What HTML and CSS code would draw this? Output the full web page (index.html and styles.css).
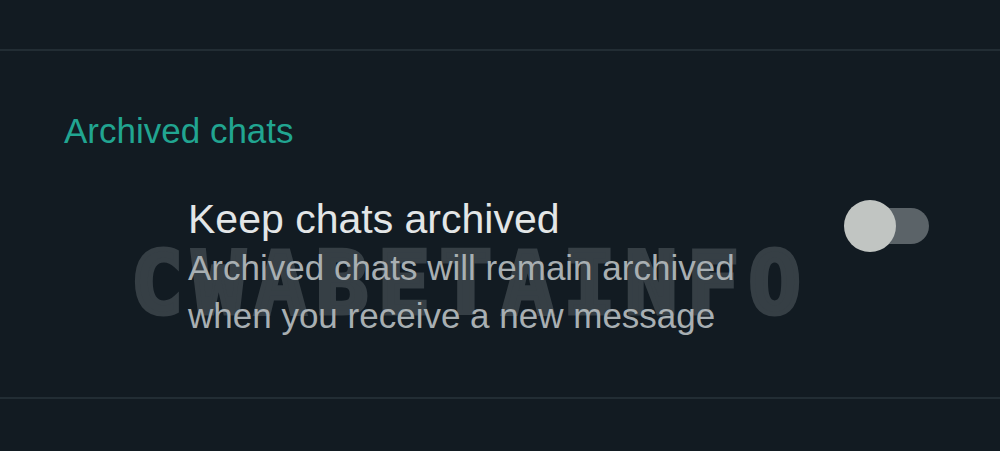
FILE: index.html
```html
<!DOCTYPE html>
<html>
<head>
<meta charset="utf-8">
<link rel="stylesheet" href="styles.css">
</head>
<body>
<div class="page">
  <div class="top-space"></div>
  <div class="divider"></div>
  <section class="section">
    <h2 class="section-title">Archived chats</h2>
    <div class="setting">
      <div class="setting-text">
        <div class="setting-title">Keep chats archived</div>
        <div class="setting-desc">Archived chats will remain archived<br>when you receive a new message</div>
      </div>
      <div class="toggle"><div class="thumb"></div></div>
    </div>
    <div class="watermark">CWABETAINFO</div>
  </section>
  <div class="divider"></div>
</div>
</body>
</html>
```
FILE: styles.css
```css
html, body {
  margin: 0;
  padding: 0;
  background: #121b22;
}
.page {
  width: 1000px;
  height: 451px;
  overflow: hidden;
  font-family: "Liberation Sans", Arial, sans-serif;
}
.top-space { height: 49px; }
.divider {
  height: 2px;
  background: #222d34;
}
.section {
  position: relative;
  height: 346px;
}
.section-title {
  margin: 0;
  padding: 60px 0 0 64px;
  font-weight: normal;
  font-size: 35px;
  line-height: 40px;
  color: #21a591;
}
.setting {
  display: flex;
  align-items: flex-start;
  padding: 44px 0 0 188px;
}
.setting-text { flex: 1; position: relative; z-index: 2; }
.setting-title {
  font-size: 41px;
  line-height: 48px;
  color: #e3e6e7;
}
.setting-desc {
  margin-top: 1px;
  font-size: 35px;
  line-height: 48px;
  color: #a8afb2;
}
.toggle {
  position: relative;
  width: 60px;
  height: 36px;
  margin: 13px 71px 0 0;
  border-radius: 18px;
  background: #5b6368;
}
.thumb {
  position: absolute;
  left: -25px;
  top: -8px;
  width: 52px;
  height: 52px;
  border-radius: 50%;
  background: #c1c5c2;
}
.watermark {
  position: absolute;
  left: 131px;
  top: 197px;
  font-family: "DejaVu Sans Mono", monospace;
  font-weight: bold;
  font-size: 86px;
  line-height: 70px;
  letter-spacing: 10px;
  color: #363f45;
  -webkit-text-stroke: 5px #363f45;
  z-index: 1;
}
```
